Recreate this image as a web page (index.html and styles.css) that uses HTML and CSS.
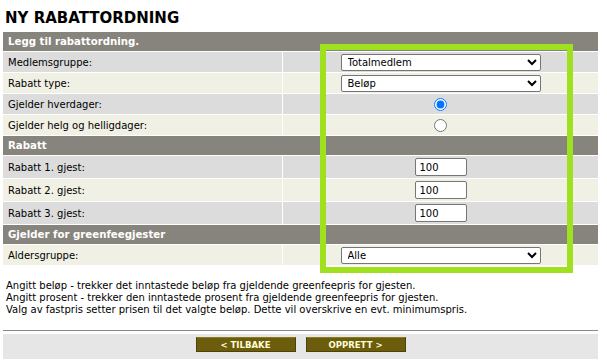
FILE: index.html
```
<!DOCTYPE html>
<html lang="no">
<head>
<meta charset="utf-8">
<title>Ny rabattordning</title>
<link rel="stylesheet" href="styles.css">
</head>
<body>
<div class="page">
  <h1 class="title">NY RABATTORDNING</h1>
  <table class="form">
    <colgroup><col class="c1"><col class="c2"></colgroup>
    <tr class="hdr"><td colspan="2">Legg til rabattordning.</td></tr>
    <tr class="odd"><td class="lbl">Medlemsgruppe:</td><td class="val"><select class="sel"><option>Totalmedlem</option></select></td></tr>
    <tr class="even"><td class="lbl">Rabatt type:</td><td class="val"><select class="sel"><option>Beløp</option></select></td></tr>
    <tr class="odd"><td class="lbl">Gjelder hverdager:</td><td class="val"><input type="radio" class="rad" checked></td></tr>
    <tr class="even"><td class="lbl">Gjelder helg og helligdager:</td><td class="val"><input type="radio" class="rad"></td></tr>
    <tr class="hdr"><td colspan="2">Rabatt</td></tr>
    <tr class="odd tall"><td class="lbl">Rabatt 1. gjest:</td><td class="val"><input type="text" class="txt" value="100"></td></tr>
    <tr class="even tall"><td class="lbl">Rabatt 2. gjest:</td><td class="val"><input type="text" class="txt" value="100"></td></tr>
    <tr class="odd tall"><td class="lbl">Rabatt 3. gjest:</td><td class="val"><input type="text" class="txt" value="100"></td></tr>
    <tr class="hdr"><td colspan="2">Gjelder for greenfeegjester</td></tr>
    <tr class="even"><td class="lbl">Aldersgruppe:</td><td class="val"><select class="sel"><option>Alle</option></select></td></tr>
  </table>
  <div class="notes">
    <p>Angitt beløp - trekker det inntastede beløp fra gjeldende greenfeepris for gjesten.</p>
    <p>Angitt prosent - trekker den inntastede prosent fra gjeldende greenfeepris for gjesten.</p>
    <p>Valg av fastpris setter prisen til det valgte beløp. Dette vil overskrive en evt. minimumspris.</p>
  </div>
  <hr class="rule">
  <div class="actions">
    <button class="btn">&lt; TILBAKE</button>
    <button class="btn">OPPRETT &gt;</button>
  </div>
  <div class="highlight"></div>
</div>
</body>
</html>
```
FILE: styles.css
```
html, body {
  margin: 0;
  padding: 0;
  background: #ffffff;
}
body {
  font-family: "DejaVu Sans", Verdana, sans-serif;
  font-size: 10px;
  color: #000;
}
.page {
  position: relative;
  width: 595px;
  padding: 0 9px 0 3px;
}
.title {
  margin: 0 0 0 2px;
  padding-top: 8px;
  height: 24px;
  line-height: 20px;
  font-size: 15px;
  font-weight: bold;
  color: #000;
}
.form {
  width: 595px;
  border-collapse: separate;
  border-spacing: 0 1px;
  margin: -1px 0 0 0;
  background: #fff;
  table-layout: fixed;
}
.c1 { width: 280px; }
.c2 { width: 315px; }
.form td {
  padding: 0 0 0 5px;
  height: 20px;
  vertical-align: middle;
}
.hdr td {
  background: #87847d;
  color: #fff;
  font-weight: bold;
  height: 19px;
  font-size: 10.2px;
}
.odd td { background: #dcdcdc; }
.even td { background: #f1f0e4; }
.tall td { height: 22px; }
.form td.lbl { border-right: 1px solid #fff; }
.form td.val {
  text-align: center;
  padding: 0;
}
.sel {
  width: 200px;
  height: 17px;
  font-family: "DejaVu Sans", Verdana, sans-serif;
  font-size: 10px;
  border: 1px solid #767676;
  border-radius: 2px;
  background: #fff;
  padding: 0 2px;
  display: block;
  margin: 0 auto;
  color: #000;
}
.rad {
  width: 13px;
  height: 13px;
  margin: 0;
  vertical-align: middle;
  accent-color: #0075ff;
}
.txt {
  box-sizing: border-box;
  width: 52px;
  height: 18px;
  font-family: "DejaVu Sans", Verdana, sans-serif;
  font-size: 10px;
  border: 1px solid #767676;
  border-radius: 2px;
  padding: 0 4px;
  display: block;
  margin: 0 auto;
}
.notes {
  padding: 14px 0 0 3px;
  height: 50px;
  font-size: 10px;
  line-height: 12px;
}
.notes p { margin: 0; }
.rule {
  margin: 0;
  border: 0;
  border-top: 1px solid #8a8a8a;
  height: 0;
}
.actions {
  margin-top: 3px;
  background: #e6e6e6;
  height: 22px;
  display: flex;
  justify-content: center;
  align-items: flex-start;
  gap: 10px;
  padding-top: 3px;
}
.btn {
  width: 100px;
  height: 15px;
  padding: 0;
  background: #6b5d0b;
  border: 1px solid #4d4306;
  border-top-color: #8a7a20;
  color: #fffbd6;
  font-family: "DejaVu Sans Condensed", "DejaVu Sans", sans-serif;
  font-weight: bold;
  font-size: 9.5px;
  line-height: 13px;
}
.highlight {
  position: absolute;
  left: 320px;
  top: 44px;
  width: 241px;
  height: 217px;
  border: 6px solid #9fe11e;
  pointer-events: none;
}
```
